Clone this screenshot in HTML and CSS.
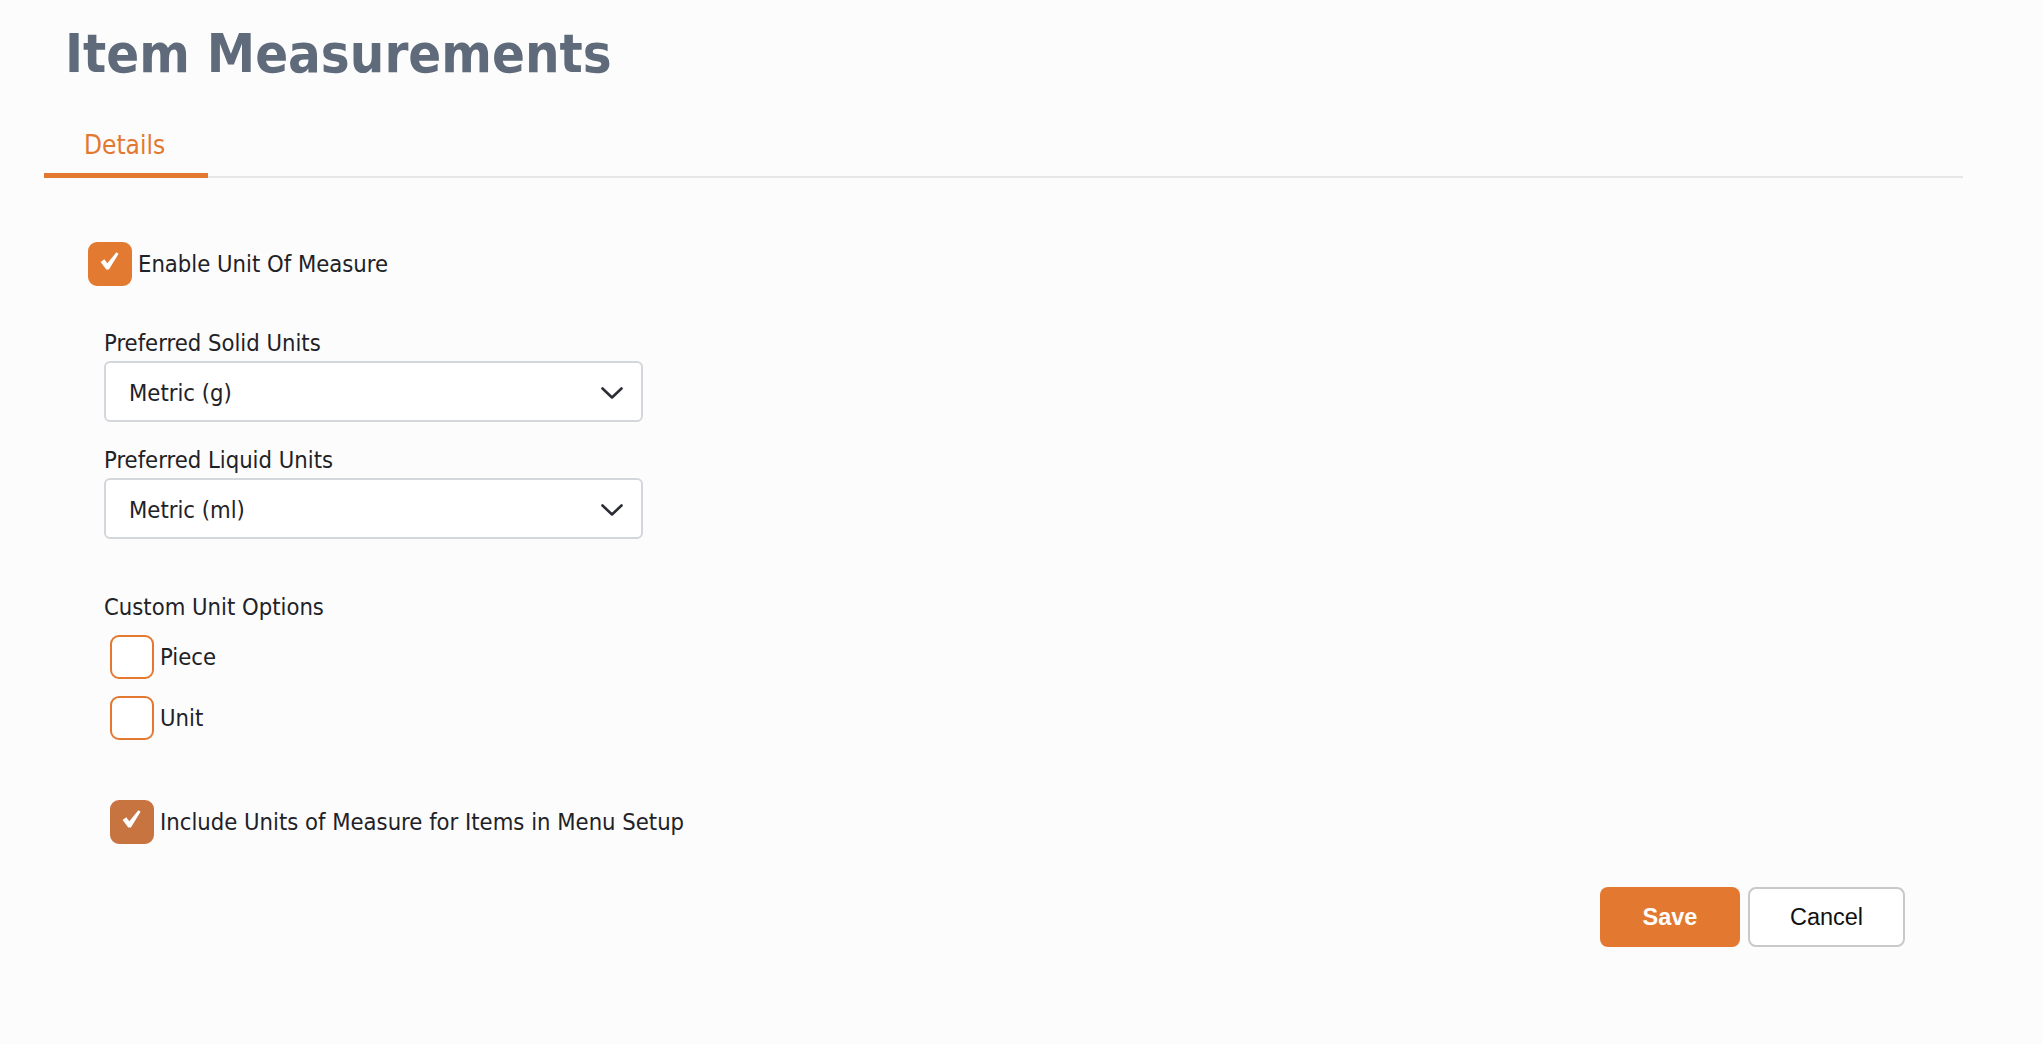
FILE: index.html
```html
<!DOCTYPE html>
<html>
<head>
<meta charset="utf-8">
<link rel="stylesheet" href="styles.css">
</head>
<body>
<div class="page">
  <h1 class="title">Item Measurements</h1>
  <div class="tabs">
    <div class="tab active">Details</div>
  </div>
  <form class="form">
    <label class="check-row main">
      <span class="box checked"><svg viewBox="0 0 20 20" width="22" height="22"><polygon points="1.5,10 4.8,7.6 7.6,11.2 15.8,1.2 17.8,2.6 9,16.8 6.6,16.8" fill="#fff"/></svg></span>
      <span class="check-label">Enable Unit Of Measure</span>
    </label>
    <div class="field first">
      <div class="field-label">Preferred Solid Units</div>
      <div class="select"><span>Metric (g)</span><svg class="chev" viewBox="0 0 22 12" width="22" height="12"><path d="M1.5 1.5 L11 10.5 L20.5 1.5" fill="none" stroke="#2b2f35" stroke-width="2.6" stroke-linecap="round" stroke-linejoin="round"/></svg></div>
    </div>
    <div class="field second">
      <div class="field-label">Preferred Liquid Units</div>
      <div class="select"><span>Metric (ml)</span><svg class="chev" viewBox="0 0 22 12" width="22" height="12"><path d="M1.5 1.5 L11 10.5 L20.5 1.5" fill="none" stroke="#2b2f35" stroke-width="2.6" stroke-linecap="round" stroke-linejoin="round"/></svg></div>
    </div>
    <div class="group">
      <div class="field-label">Custom Unit Options</div>
      <label class="check-row sub piece"><span class="box"></span><span class="check-label">Piece</span></label>
      <label class="check-row sub unit"><span class="box"></span><span class="check-label">Unit</span></label>
    </div>
    <label class="check-row include">
      <span class="box checked alt"><svg viewBox="0 0 20 20" width="22" height="22"><polygon points="1.5,10 4.8,7.6 7.6,11.2 15.8,1.2 17.8,2.6 9,16.8 6.6,16.8" fill="#fff"/></svg></span>
      <span class="check-label">Include Units of Measure for Items in Menu Setup</span>
    </label>
    <div class="actions">
      <button type="button" class="btn save">Save</button>
      <button type="button" class="btn cancel">Cancel</button>
    </div>
  </form>
</div>
</body>
</html>
```

FILE: styles.css
```css
html, body {
  margin: 0;
  padding: 0;
  background: #fcfcfc;
}
body {
  font-family: "DejaVu Sans", Verdana, sans-serif;
  font-stretch: condensed;
  color: #1f2227;
}
.page {
  padding: 0 79px 0 44px;
}
.title {
  margin: 0;
  padding: 19px 0 0 21px;
  font-size: 54px;
  line-height: 70px;
  font-weight: bold;
  font-stretch: condensed;
  color: #5f6b7a;
}
.tabs {
  display: flex;
  margin-top: 39px;
  border-bottom: 2px solid #e6e6e6;
}
.tab {
  padding: 0 43px 11px 40px;
  font-size: 26px;
  line-height: 34px;
  color: #e37830;
  margin-bottom: -2px;
  border-bottom: 5px solid #e37830;
}
.form {
  display: flex;
  flex-direction: column;
  padding: 64px 0 0 44px;
}
.check-row {
  display: flex;
  align-items: center;
  gap: 6px;
  font-size: 23.6px;
  line-height: 44px;
}
.box {
  width: 40px;
  height: 40px;
  border: 2px solid #e37830;
  border-radius: 9px;
  background: #fff;
  display: flex;
  align-items: center;
  justify-content: center;
  flex: none;
}
.box.checked {
  background: #e37a31;
  border-color: #e37a31;
}
.box.checked.alt {
  background: #c87441;
  border-color: #c87441;
}
.box svg {
  margin: -5px 0 0 0;
}
.field {
  margin-left: 16px;
  display: flex;
  flex-direction: column;
}
.field.first {
  margin-top: 40px;
}
.field.second {
  margin-top: 21px;
}
.field-label {
  font-size: 23.6px;
  line-height: 34px;
  margin-bottom: 1px;
}
.select {
  box-sizing: border-box;
  width: 539px;
  height: 61px;
  border: 2px solid #d3d6db;
  border-radius: 6px;
  background: #fff;
  display: flex;
  align-items: center;
  justify-content: space-between;
  padding: 3px 18px 0 23px;
  font-size: 23.6px;
}
.group {
  margin: 51px 0 0 16px;
  display: flex;
  flex-direction: column;
}
.check-row.sub {
  margin-left: 6px;
}
.check-row.piece {
  margin-top: 10px;
}
.check-row.unit {
  margin-top: 17px;
}
.include {
  margin: 60px 0 0 22px;
}
.actions {
  display: flex;
  justify-content: flex-end;
  gap: 8px;
  margin-top: 43px;
  padding-right: 58px;
}
.btn {
  font-family: "Liberation Sans", Arial, sans-serif;
  font-stretch: normal;
  font-size: 23.5px;
  height: 60px;
  border-radius: 8px;
  cursor: pointer;
}
.save {
  width: 140px;
  background: #e37931;
  color: #fff;
  font-weight: bold;
  border: none;
}
.cancel {
  width: 157px;
  background: #fff;
  color: #111;
  border: 2px solid #c9c9c9;
}
```
